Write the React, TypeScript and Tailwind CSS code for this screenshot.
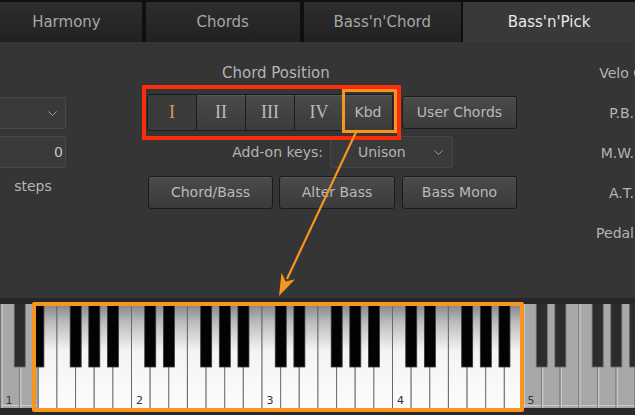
import type { ReactNode } from "react"

const WK = 130.5 / 7

function Chevron() {
  return (
    <svg width="9" height="5" viewBox="0 0 9 5" className="block">
      <polyline points="0.5,0.5 4.5,4.5 8.5,0.5" fill="none" stroke="#9a9a9a" strokeWidth="1" />
    </svg>
  )
}

function Btn({ children, className = "" }: { children: ReactNode; className?: string }) {
  return (
    <div
      className={`flex items-center justify-center rounded-[3px] border border-[#1a1a1a] bg-linear-to-b from-[#4a4a4a] to-[#3b3b3b] shadow-[inset_0_1px_0_rgba(255,255,255,0.07)] text-[14px] text-[#bababa] ${className}`}
    >
      {children}
    </div>
  )
}

function Tabs() {
  const tab = "flex h-[40px] items-center justify-center text-[15px] text-[#a6a6a6] bg-linear-to-b from-[#2e2e2e] to-[#212121]"
  return (
    <div className="flex h-[42px] bg-[#0f0f0f] pt-[2px]">
      <div className={`${tab} w-[155px] pr-[9px]`}>Harmony</div>
      <div className={`${tab} ml-[4px] w-[169px]`}>Chords</div>
      <div className={`${tab} ml-[4px] w-[173px]`}>Bass'n'Chord</div>
      <div className="ml-[2px] flex h-[40px] w-[172px] shrink-0 items-center justify-center bg-[#393939] text-[15px] text-[#e8e8e8]">
        Bass'n'Pick
      </div>
    </div>
  )
}

function Left() {
  return (
    <div className="flex w-[66px] shrink-0 flex-col pt-[55px]">
      <div className="-ml-[4px] flex h-[32px] w-[70px] items-center justify-end rounded-[2px] border border-[#474747] bg-[#3a3a3a] pr-[8px]">
        <Chevron />
      </div>
      <div className="-ml-[4px] mt-[7px] flex h-[32px] w-[70px] items-center justify-end rounded-[2px] border border-[#474747] bg-[#3a3a3a] pr-[2px] text-[14px] text-[#c4c4c4]">
        0
      </div>
      <div className="mt-[9px] text-center text-[14px] leading-[18px] text-[#b4b4b4]">steps</div>
    </div>
  )
}

function Middle() {
  const seg = "w-[48px] h-[35px] rounded-none border-0 font-['Liberation_Serif',serif] text-[18px]"
  return (
    <div className="ml-[81px] flex w-[371px] shrink-0 flex-col">
      <div className="mt-[22px] h-[18px] pl-[75px] text-[15px] leading-[18px] text-[#b4b4b4]">Chord Position</div>
      <div className="mt-[12px] flex items-center">
        <div className="flex gap-px rounded-[3px] bg-[#1b1b1b] p-px">
          <div className="flex h-[35px] w-[48px] items-center justify-center bg-[#3b3b3b] font-['Liberation_Serif',serif] text-[18px] text-[#e39a45]">
            I
          </div>
          <Btn className={seg}>II</Btn>
          <Btn className={seg}>III</Btn>
          <Btn className={seg}>IV</Btn>
          <Btn className="h-[35px] w-[48px] rounded-none border-0">Kbd</Btn>
        </div>
        <Btn className="ml-[9px] h-[33px] w-[115px]">User Chords</Btn>
      </div>
      <div className="mt-[5px] flex h-[32px] items-center">
        <div className="w-[176px] text-right text-[14px] text-[#b4b4b4]">Add-on keys:</div>
        <div className="ml-[7px] flex h-[32px] w-[123px] items-center justify-between rounded-[2px] border border-[#464646] bg-[#3a3a3a] pl-[27px] pr-[9px] text-[14px] text-[#b4b4b4]">
          <span>Unison</span>
          <Chevron />
        </div>
      </div>
      <div className="ml-px mt-[8px] flex">
        <Btn className="h-[33px] w-[125px]">Chord/Bass</Btn>
        <Btn className="ml-[6px] h-[33px] w-[116px]">Alter Bass</Btn>
        <Btn className="ml-[7px] h-[33px] w-[115px]">Bass Mono</Btn>
      </div>
    </div>
  )
}

function Right() {
  return (
    <div className="mr-px w-[50px] shrink-0 pt-[11px] text-right text-[14px] text-[#b4b4b4]">
      <div className="-mr-[9px] h-[40px] whitespace-nowrap leading-[40px]">Velo C</div>
      <div className="h-[40px] leading-[40px]">P.B.</div>
      <div className="h-[40px] leading-[40px]">M.W.</div>
      <div className="h-[40px] leading-[40px]">A.T.</div>
      <div className="h-[40px] leading-[40px]">Pedal</div>
    </div>
  )
}

function Piano() {
  const whites = Array.from({ length: 35 }, (_, i) => i)
  const blacks: number[] = []
  for (let o = 0; o < 5; o++) for (const b of [1, 2, 4, 5, 6]) blacks.push(0.5 + (7 * o + b) * WK + 0.6)
  return (
    <div className="h-[117px] border-t-[6px] border-[#272727] bg-[#2a2a2a]">
      <svg width="635" height="106" className="block">
        <defs>
          <linearGradient id="wk" x1="0" y1="0" x2="0" y2="1">
            <stop offset="0" stopColor="#858585" />
            <stop offset="0.18" stopColor="#bdbdbd" />
            <stop offset="0.45" stopColor="#f4f4f4" />
            <stop offset="1" stopColor="#fcfcfc" />
          </linearGradient>
        </defs>
        {whites.map((i) => {
          const x = 0.5 + i * WK
          const on = i >= 2 && i <= 27
          return (
            <g key={i}>
              <rect x={x} y={0} width={WK} height={104} fill={on ? "url(#wk)" : "#a8a8a8"} />
              <rect x={x} y={0} width={1} height={104} fill={on ? "#6a6a6a" : "#7a7a7a"} />
              {!on && <rect x={x + 1} y={0} width={1.2} height={104} fill="#cdcdcd" />}
              {!on && <rect x={x + 1} y={101} width={WK - 1} height={1} fill="#cdcdcd" />}
              {i % 7 === 0 && (
                <text x={x + 5} y={100} fontSize="11" fontFamily="DejaVu Sans, sans-serif" fill={on ? "#2b3550" : "#3a3a3a"}>
                  {i / 7 + 1}
                </text>
              )}
            </g>
          )
        })}
        {blacks.map((c, k) => {
          const on = c > 36 && c < 520
          return (
            <rect
              key={k}
              x={c - 5.5}
              y={-1}
              width={11}
              height={64}
              fill={on ? "#030303" : "#2c2c2c"}
              stroke={on ? "#3a3a3a" : "#6a6a6a"}
              strokeWidth={0.8}
            />
          )
        })}
      </svg>
    </div>
  )
}

function Overlay() {
  return (
    <>
      <div className="pointer-events-none absolute left-[142px] top-[85px] h-[55px] w-[259px] border-[4px] border-[#fb2c0c]" />
      <div className="pointer-events-none absolute left-[342px] top-[89px] h-[44px] w-[55px] border-[3px] border-[#f7951f]" />
      <div className="pointer-events-none absolute left-[32px] top-[302px] h-[110px] w-[492px] rounded-[2px] border-[4px] border-[#f7951f]" />
      <svg className="pointer-events-none absolute left-0 top-0" width="635" height="415">
        <line x1="357" y1="130" x2="287" y2="279" stroke="#f7951f" strokeWidth="2.2" />
        <polygon points="279,296 295.1,279.2 285.7,281.5 281.5,272.8" fill="#f7951f" />
      </svg>
    </>
  )
}

export default function App() {
  return (
    <div className="relative h-[415px] w-[635px] overflow-hidden bg-[#353535] font-['DejaVu_Sans',sans-serif]">
      <Tabs />
      <div className="flex h-[256px]">
        <Left />
        <Middle />
        <div className="flex-1" />
        <Right />
      </div>
      <Piano />
      <Overlay />
    </div>
  )
}
